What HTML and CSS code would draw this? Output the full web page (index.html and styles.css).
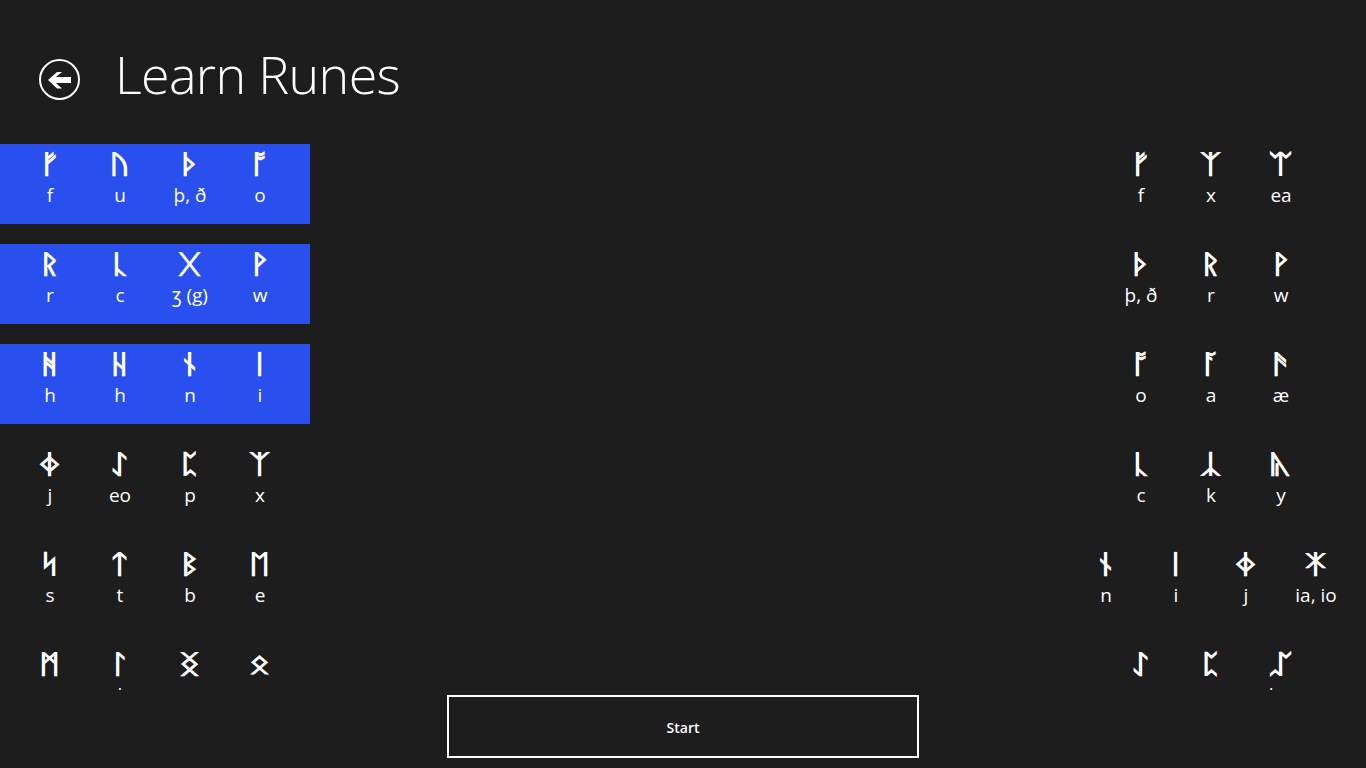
FILE: index.html
```html
<!DOCTYPE html>
<html lang="en">
<head>
  <meta charset="UTF-8">
  <title>Learn Runes</title>
  <link rel="stylesheet" href="styles.css">
</head>
<body>
<header class="header">
  <button class="back-button" aria-label="Back">
    <svg width="41" height="41" viewBox="0 0 41 41">
      <circle cx="20.5" cy="20.5" r="19.5" fill="none" stroke="#fff" stroke-width="2"/>
      <path d="M9 21 L18 13 L23 13 L17 18 L32 18 L32 24 L17 24 L23 29.5 L18 29.5 Z" fill="#fff"/>
    </svg>
  </button>
  <h1>Learn Runes</h1>
</header>
<main class="columns">
  <section class="rune-list">
    <div class="tile selected">
      <div class="rune"><span class="glyph">ᚠ</span><span class="label">f</span></div>
      <div class="rune"><span class="glyph">ᚢ</span><span class="label">u</span></div>
      <div class="rune"><span class="glyph">ᚦ</span><span class="label">þ, ð</span></div>
      <div class="rune"><span class="glyph">ᚩ</span><span class="label">o</span></div>
    </div>
    <div class="tile selected">
      <div class="rune"><span class="glyph">ᚱ</span><span class="label">r</span></div>
      <div class="rune"><span class="glyph">ᚳ</span><span class="label">c</span></div>
      <div class="rune"><span class="glyph">ᚷ</span><span class="label">ʒ (g)</span></div>
      <div class="rune"><span class="glyph">ᚹ</span><span class="label">w</span></div>
    </div>
    <div class="tile selected">
      <div class="rune"><span class="glyph">ᚻ</span><span class="label">h</span></div>
      <div class="rune"><span class="glyph">ᚺ</span><span class="label">h</span></div>
      <div class="rune"><span class="glyph">ᚾ</span><span class="label">n</span></div>
      <div class="rune"><span class="glyph">ᛁ</span><span class="label">i</span></div>
    </div>
    <div class="tile">
      <div class="rune"><span class="glyph">ᛄ</span><span class="label">j</span></div>
      <div class="rune"><span class="glyph">ᛇ</span><span class="label">eo</span></div>
      <div class="rune"><span class="glyph">ᛈ</span><span class="label">p</span></div>
      <div class="rune"><span class="glyph">ᛉ</span><span class="label">x</span></div>
    </div>
    <div class="tile">
      <div class="rune"><span class="glyph">ᛋ</span><span class="label">s</span></div>
      <div class="rune"><span class="glyph">ᛏ</span><span class="label">t</span></div>
      <div class="rune"><span class="glyph">ᛒ</span><span class="label">b</span></div>
      <div class="rune"><span class="glyph">ᛖ</span><span class="label">e</span></div>
    </div>
    <div class="tile">
      <div class="rune"><span class="glyph">ᛗ</span><span class="label">m</span></div>
      <div class="rune"><span class="glyph">ᛚ</span><span class="label">l</span></div>
      <div class="rune"><span class="glyph">ᛝ</span><span class="label">ng</span></div>
      <div class="rune"><span class="glyph">ᛟ</span><span class="label">œ</span></div>
    </div>
  </section>
  <section class="rune-list">
    <div class="tile">
      <div class="rune"><span class="glyph">ᚠ</span><span class="label">f</span></div>
      <div class="rune"><span class="glyph">ᛉ</span><span class="label">x</span></div>
      <div class="rune"><span class="glyph">ᛠ</span><span class="label">ea</span></div>
    </div>
    <div class="tile">
      <div class="rune"><span class="glyph">ᚦ</span><span class="label">þ, ð</span></div>
      <div class="rune"><span class="glyph">ᚱ</span><span class="label">r</span></div>
      <div class="rune"><span class="glyph">ᚹ</span><span class="label">w</span></div>
    </div>
    <div class="tile">
      <div class="rune"><span class="glyph">ᚩ</span><span class="label">o</span></div>
      <div class="rune"><span class="glyph">ᚪ</span><span class="label">a</span></div>
      <div class="rune"><span class="glyph">ᚫ</span><span class="label">æ</span></div>
    </div>
    <div class="tile">
      <div class="rune"><span class="glyph">ᚳ</span><span class="label">c</span></div>
      <div class="rune"><span class="glyph">ᛣ</span><span class="label">k</span></div>
      <div class="rune"><span class="glyph">ᚣ</span><span class="label">y</span></div>
    </div>
    <div class="tile">
      <div class="rune"><span class="glyph">ᚾ</span><span class="label">n</span></div>
      <div class="rune"><span class="glyph">ᛁ</span><span class="label">i</span></div>
      <div class="rune"><span class="glyph">ᛄ</span><span class="label">j</span></div>
      <div class="rune"><span class="glyph">ᛡ</span><span class="label">ia, io</span></div>
    </div>
    <div class="tile">
      <div class="rune"><span class="glyph">ᛇ</span><span class="label">eo</span></div>
      <div class="rune"><span class="glyph">ᛈ</span><span class="label">p</span></div>
      <div class="rune"><span class="glyph">ᛢ</span><span class="label">kw</span></div>
    </div>
  </section>
</main>
<div class="actions"><button class="start-button">Start</button></div>
</body>
</html>
```

FILE: styles.css
```css
body {
  margin: 0;
  height: 768px;
  overflow: hidden;
  background-color: #1d1d1d;
  color: #ffffff;
  font-family: 'Open Sans', 'Noto Sans', sans-serif;
}
.header {
  display: flex;
  align-items: flex-start;
  height: 144px;
}
.back-button {
  margin: 59px 0 0 39px;
  padding: 0;
  width: 41px;
  height: 41px;
  background: none;
  border: none;
}
h1 {
  margin: 36px 0 0 35px;
  font-size: 52px;
  font-weight: 300;
  letter-spacing: -0.65px;
  line-height: 76px;
}
.columns {
  display: flex;
  justify-content: space-between;
  height: 546px;
  overflow: hidden;
}
.rune-list {
  width: 310px;
}
.tile {
  display: flex;
  justify-content: center;
  height: 80px;
  margin-bottom: 20px;
}
.tile.selected {
  background-color: #2950ee;
}
.rune {
  display: flex;
  flex-direction: column;
  align-items: center;
  width: 70px;
}
.glyph {
  font-family: 'DejaVu Sans', 'Noto Sans', sans-serif;
  font-size: 26px;
  line-height: 40px;
  -webkit-text-stroke: 1.2px #ffffff;
  transform: scaleX(1.35);
}
.label {
  margin-top: -1px;
  font-size: 19px;
  line-height: 24px;
}
.actions {
  display: flex;
  justify-content: center;
  padding-top: 5px;
}
.start-button {
  width: 472px;
  height: 63px;
  padding-top: 3px;
  background: none;
  border: 2px solid #ffffff;
  color: #ffffff;
  font-family: inherit;
  font-size: 14px;
  font-weight: 600;
}
```
